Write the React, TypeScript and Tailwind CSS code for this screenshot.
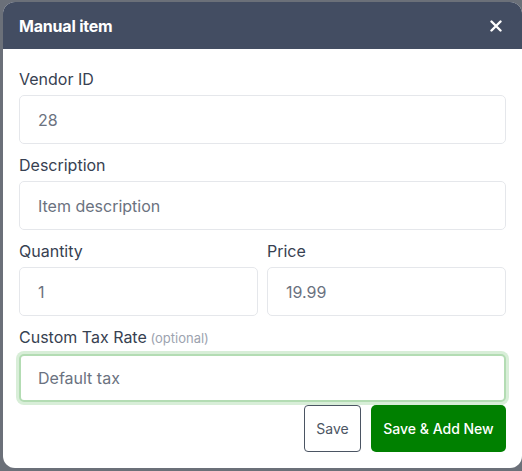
import React from 'react'

const font = { fontFamily: 'Inter, "Liberation Sans", sans-serif' }

function Field({ label, value, optional, focused, className }: any) {
  return (
    <div className={className}>
      <label className="block text-[16px] leading-[24px] text-[#374151] mb-[4px]">
        {label}
        {optional ? <span className="text-[13px] text-[#9ca3af]"> (optional)</span> : null}
      </label>
      <div
        className={
          focused
            ? 'h-[48px] rounded-[5px] border-2 border-[#b3dcb3] ring-[3px] ring-[#d8eed8] bg-white flex items-center pl-[17px] text-[16px] text-[#6b7280]'
            : 'h-[49px] rounded-[5px] border border-[#e5e7eb] bg-white flex items-center pl-[18px] text-[16px] text-[#6b7280]'
        }
      >
        {value}
      </div>
    </div>
  )
}

export default function App() {
  return (
    <div style={font} className="w-[522px] h-[471px] bg-[#6b7079] pt-[2px] pl-[3px] overflow-hidden">
      <div className="w-[519px] h-[466px] bg-white rounded-[12px] overflow-hidden flex flex-col">
        <div className="h-[47px] bg-[#434d62] flex items-center justify-between pl-[16px] pr-[20px]">
          <span className="text-white font-bold text-[16px] tracking-[-0.2px]">Manual item</span>
          <svg width="12" height="12" viewBox="0 0 12 12" className="mt-[1px]">
            <path d="M1.5 1.5 L10.5 10.5 M10.5 1.5 L1.5 10.5" stroke="white" strokeWidth="2.4" strokeLinecap="round" />
          </svg>
        </div>
        <div className="px-[16px] pt-[18px] flex flex-col">
          <Field label="Vendor ID" value="28" />
          <Field label="Description" value="Item description" className="mt-[9px]" />
          <div className="mt-[9px] flex gap-[9px]">
            <Field label="Quantity" value="1" className="flex-1" />
            <Field label="Price" value="19.99" className="flex-1" />
          </div>
          <Field label="Custom Tax Rate" optional value="Default tax" focused className="mt-[9px]" />
          <div className="mt-[3px] flex justify-end gap-[10px]">
            <button className="h-[47px] w-[57px] rounded-[4px] border border-[#4b5563] text-[14px] text-[#4b5563] bg-white">
              Save
            </button>
            <button className="h-[47px] w-[135px] rounded-[5px] bg-[#008000] text-[14px] font-medium text-white">
              Save &amp; Add New
            </button>
          </div>
        </div>
      </div>
    </div>
  )
}
